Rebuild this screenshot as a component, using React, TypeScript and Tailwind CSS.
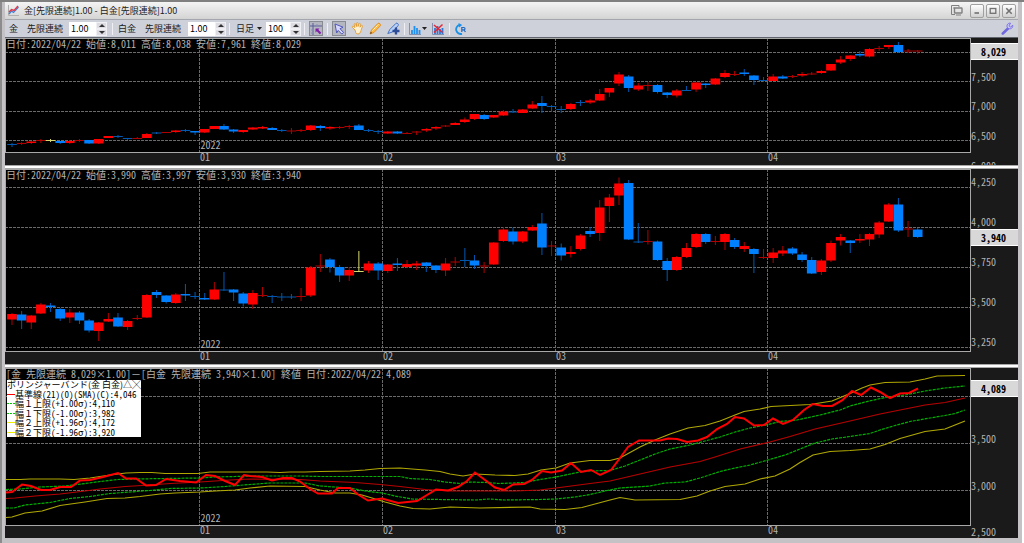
import type { ReactNode } from "react";

// [high, body top, body bottom, low, direction] in plot coordinates
type Candle = [number, number, number, number, "u" | "d" | "y"];
type Label = { text: string; y: number };
type Plot = { top: number; height: number };

const X0 = 5;
const W = 966;
const STEP = 9.635;
const FIRST = 12;

const COLORS = { u: "#ff0000", d: "#0080ff", y: "#f0f080" };
const WICKS = { u: "#b00000", d: "#0058b0", y: "#d8d870" };

const months = [
    { x: 200, label: "01" },
    { x: 383, label: "02" },
    { x: 556, label: "03" },
    { x: 768, label: "04" },
];

const gold: Candle[] = [
    [143, 144, 145, 147, "d"], [142, 143, 144, 145, "u"], [141, 141.5, 143, 144, "u"], [139, 140, 141, 143, "u"], [139, 140, 141, 142, "y"],
    [141, 141, 143, 144, "d"], [140, 141, 143, 144, "u"], [139, 140, 141, 142, "u"], [140, 140, 143.5, 144, "d"], [139, 139, 143.5, 144, "u"],
    [136, 136, 138, 138, "u"], [135, 136, 137, 138, "d"], [138, 138, 139, 140, "d"], [137, 138, 139, 139, "u"], [133, 134, 138, 138, "u"],
    [132, 132.5, 133.5, 134, "d"], [132, 132, 133, 133, "u"], [130, 130.5, 132, 133, "u"], [129, 130, 131, 132, "d"], [131, 131, 132.5, 135, "d"],
    [129, 129, 132.5, 133, "u"], [126, 126, 129, 129, "u"], [124, 126, 129.5, 130, "d"], [129, 129.5, 131.5, 133, "d"], [130, 130, 132, 133, "u"],
    [127, 127.5, 129.5, 130, "u"], [126, 127, 128.5, 129, "u"], [127, 128, 130, 130, "d"], [129, 130, 131, 132, "d"], [128, 130.5, 131.5, 134, "u"],
    [129, 130, 131, 132, "u"], [125, 125.5, 130, 131, "u"], [125, 126, 128, 131, "d"], [126, 127, 128.5, 130, "u"], [126, 127, 128, 129, "u"],
    [125, 126, 127, 129, "u"], [124, 125.5, 130, 130, "d"], [129, 130, 131, 132, "d"], [130, 131, 132, 134, "d"], [131, 131.5, 133.5, 134, "u"],
    [131, 131.5, 133.5, 134, "d"], [132, 133, 134, 134, "u"], [131, 131.5, 132.5, 135, "u"], [128, 129, 130.5, 132, "u"], [126, 127, 128.5, 130, "u"],
    [125, 125.5, 126.5, 127, "u"], [122, 123, 125, 125, "u"], [117.5, 119.5, 122, 123, "u"], [114, 114, 119, 120, "u"], [114, 115, 119, 120, "d"],
    [115, 115, 117.5, 118, "u"], [110, 111.5, 115.5, 116, "u"], [109, 111.5, 112.5, 113, "d"], [109, 109.5, 113, 113, "u"], [101, 104.5, 108.5, 109, "u"],
    [96, 103, 106, 113, "d"], [105, 106, 107, 112, "d"], [106, 109, 110, 113, "d"], [103, 104, 109, 110, "u"], [100, 102, 103, 106, "d"],
    [99, 100.5, 102.5, 104, "u"], [89, 94, 100.5, 101, "u"], [88, 88, 92.5, 97, "u"], [72, 74.5, 83.5, 86, "u"], [75, 76.5, 88, 92, "d"],
    [83, 85.5, 89.5, 91, "u"], [82, 85, 86, 91, "u"], [84, 85, 92, 93.5, "d"], [92, 92.5, 95, 98, "d"], [89, 90.5, 95.5, 97.5, "u"],
    [86, 90, 91, 91, "d"], [82, 82.5, 89.5, 92, "u"], [83, 83.5, 85, 88, "d"], [78, 78.5, 84.5, 85, "u"], [70, 73, 77, 78, "u"],
    [71, 74, 75, 76, "u"], [69, 72.5, 74, 76, "d"], [75, 75.5, 80, 85, "d"], [77, 80, 81, 82, "d"], [74, 76.5, 81, 81, "u"],
    [75, 76.5, 78.5, 79, "d"], [75, 76, 77, 78, "u"], [72, 74, 75.5, 77, "u"], [72, 73.5, 74.5, 75, "u"], [70, 71, 73, 74, "u"],
    [64, 64, 70.5, 71, "u"], [56, 59.5, 62.5, 64, "u"], [55, 55.5, 59, 61, "u"], [51, 54, 55.5, 57, "d"], [48, 49, 56.5, 57.5, "u"],
    [46, 48, 49, 51, "u"], [45, 45, 47, 49, "u"], [42, 45, 52, 53, "d"], [49, 50.5, 51.5, 53, "u"], [50, 50.5, 51.5, 54, "u"],
];

const platinum: Candle[] = [
    [313, 314, 319.5, 325, "u"], [311, 314.5, 320.5, 329, "d"], [315, 315.5, 322.5, 329, "u"], [303, 304.5, 313.5, 314, "u"], [303, 305.5, 307, 312, "d"],
    [308, 309, 318.5, 321, "d"], [309, 312.5, 317.5, 323, "u"], [311, 312.5, 320.5, 324, "d"], [319, 320.5, 330.5, 332.5, "d"], [322, 322.5, 331, 341, "u"],
    [313, 319, 321.5, 322, "u"], [313, 317.5, 326.5, 327, "d"], [320, 321, 327, 330, "u"], [315, 318, 319, 320, "u"], [294, 295, 317.5, 318, "u"],
    [290, 292, 295, 298, "d"], [295, 295.5, 302, 303.5, "d"], [293, 294.5, 303, 304, "u"], [284, 294, 295.5, 301, "d"], [292, 296, 297, 299, "d"],
    [293, 298, 299.5, 300, "d"], [282, 289.5, 299.5, 300, "u"], [272, 289.5, 290.5, 291, "d"], [289, 289.5, 292.5, 301, "d"], [292, 293.5, 303.5, 306.5, "d"],
    [290, 293, 304.5, 309, "u"], [287, 295, 296, 297, "u"], [295, 296, 297, 303, "d"], [293, 296.5, 297.5, 301, "d"], [294, 296.5, 297.5, 299, "d"],
    [288, 296, 297, 301, "u"], [266, 267.5, 295.5, 297, "u"], [254, 265.5, 266.5, 272, "u"], [258, 259.5, 267, 272.5, "d"], [265, 267, 275.5, 282, "d"],
    [267, 270, 275.5, 281, "u"], [251, 271, 272, 272, "y"], [261, 263.5, 270.5, 273, "u"], [262, 263.5, 270.5, 280, "d"], [264, 264.5, 271, 273, "u"],
    [258, 263.5, 265, 271, "d"], [260, 264, 267, 268, "u"], [261, 263.5, 265.5, 270, "u"], [262, 262.5, 266, 272, "d"], [265, 265.5, 270, 273, "d"],
    [258, 263.5, 270.5, 276, "u"], [257, 261.5, 262.5, 266, "u"], [248, 260, 261, 267, "d"], [255, 260.5, 265.5, 269, "d"], [262, 265.5, 266.5, 273, "u"],
    [242, 242.5, 264.5, 265, "u"], [227, 229.5, 241, 242, "u"], [227.5, 231.5, 241.5, 244.5, "d"], [231, 231.5, 241.5, 243, "u"], [225, 227, 230.5, 231, "u"],
    [213, 223.5, 247.5, 255, "d"], [241, 245.5, 246.5, 256, "u"], [243.5, 247.5, 255.5, 260.5, "d"], [246, 252, 254, 257.5, "u"], [234, 235.5, 249, 250.5, "u"],
    [227, 231, 234, 237, "d"], [200, 207.5, 233, 241, "u"], [194, 197.5, 206, 222, "u"], [177.5, 183.5, 195.5, 205, "u"], [180, 183, 239.5, 240, "d"],
    [223, 241.5, 242.5, 243, "d"], [230, 241, 242, 244.5, "u"], [240.5, 241.5, 260, 261, "d"], [258, 261, 270, 281, "d"], [256, 257, 270, 271, "u"],
    [243, 248, 257, 258, "u"], [233, 234, 247, 248, "u"], [233, 234, 242, 244, "d"], [236, 241, 242, 245, "u"], [233, 234, 242, 250, "u"],
    [238, 240, 247, 249, "d"], [242, 246, 249, 252, "u"], [248, 249, 254, 273, "d"], [249, 257, 258, 259, "u"], [248, 252.5, 258, 263, "u"],
    [246, 250.5, 253.5, 256, "u"], [247, 248.5, 253.5, 255, "d"], [252, 254.5, 260, 262, "d"], [257, 260, 273.5, 274, "d"], [259, 260.5, 272, 275, "u"],
    [240.5, 243, 260.5, 262, "u"], [234, 237, 240.5, 245.5, "u"], [240, 240.5, 243, 253, "d"], [234, 239, 240.5, 243, "u"], [233, 234, 239.5, 246, "u"],
    [221, 222.5, 234.5, 238, "u"], [203, 204.5, 221.5, 222, "u"], [198, 204.5, 230.5, 232, "d"], [221, 228.5, 229.5, 237, "u"], [228, 229.5, 237, 238, "d"],
];

const bands = [
    {
        color: "#b0a800",
        points:
            "6,479.5 20,479.5 30,479 60,479 74,479.5 90,478 100,476.5 110,475 118,474 126,473 140,472.5 152,472.5 165,473.5 198,473.5 210,472 267,472 280,472.5 290,472 305,472 320,471.5 350,471 365,470 380,468.5 400,468 412,469 425,470 440,471.5 450,474 463,476 475,474 495,475 515,475.5 528,474 541,470 556,468 570,463 590,460.5 610,460.5 620,458 640,447 655,440 670,434 688,428 705,425.5 720,421 735,415 744,411.5 760,409 771,406.5 810,404.5 832,401 850,393.5 862,388 870,385 885,382.5 910,382 925,379 937,376 965,375.5",
    },
    {
        color: "#b0a800",
        points:
            "6,517.5 12,517 25,513 42,511 60,505.5 85,502 107,498.5 125,498 140,496.5 160,494 175,493 200,492 215,491 235,490 250,488 270,486 305,486.5 320,490 335,493 350,493 362,495 372,498 385,502 400,506 413,508.5 430,509 450,507 480,508 530,507 540,509 565,509.5 582,507.5 595,504 610,500 620,497.5 635,500 680,499.5 697,496 710,491 725,486.5 745,484 760,479 775,476 790,469 800,462.5 813,455 830,451.5 850,450.5 870,449 885,444.5 900,438.5 925,431.5 945,429 955,425 965,421",
    },
    {
        color: "#00b000",
        dash: "3 1",
        points:
            "6,489.5 20,489 40,487 65,486 85,483.5 100,481.5 118,479.5 135,479 165,478.5 200,478 215,477 235,476.5 250,476 300,476 320,476.5 400,476.5 410,478.5 430,479.5 445,482 460,483.5 470,482 485,482.5 500,483.5 525,482.5 540,479.5 556,477 575,473 585,471 610,470.5 625,466 640,460 655,454 670,449 690,445 705,441 720,437 735,432 750,428 768,424.5 780,421.5 797,420 820,415 840,410 850,406 865,402 885,397.5 905,395 925,391 945,388 965,386",
    },
    {
        color: "#00b000",
        dash: "3 1",
        points:
            "6,508 14,508 25,505 50,502.5 70,498.5 90,496.5 110,493.5 130,492 150,490.5 170,488.5 200,488 225,486.5 250,484.5 270,483 305,483 320,486 335,487 350,488 365,491 382,493 395,496 412,499 440,499.5 475,500 490,499 505,500 540,499.5 556,499 575,497 590,494.5 605,491 620,488 650,486 665,483 685,482 700,478 720,471.5 735,468 750,465 768,460 785,455 800,449 815,443 832,439 850,436.5 870,433.5 880,430 895,425.5 910,421.5 930,418 945,415.5 955,413.5 965,410",
    },
    {
        color: "#b80000",
        points:
            "6,498.5 15,498 35,496 60,494 85,491 100,489 125,486.5 150,485 170,483.5 200,482 230,480 250,479 300,479.5 320,481 355,482.5 380,484.5 400,486.5 425,489.5 450,491 515,491 540,490 556,488 590,483.5 610,481 640,474 670,467 700,461.5 715,457 740,449 770,442 790,436.5 815,429 850,421 880,414 910,408 925,405 945,402.5 965,398",
    },
    {
        color: "#ff0000",
        width: 2,
        points:
            "6,492.5 12,492 22,484.5 31,486 41,490 50,490 60,487 71,487 80,480.5 90,480 103,477 118,473 126,478.5 136,478.5 146,485.5 156,485 166,479 180,481 196,482.5 206,475 215,476 225,481 235,485 244,475 250,476 262,477 272,480.5 283,478 292,478 300,481.5 310,489 318,493.5 332,493.5 338,488 350,488 358,494.5 368,500.5 382,498.5 398,503 417,501 427,495 436,489.5 448,490.5 458,487 467,481 475,472.5 485,480 495,487.5 504,490 513,484.5 524,484 532,480 542,471 551,472.5 562,470.5 571,463 581,472 591,470 600,475 611,470 620,458 628,447 639,440.5 660,440.5 668,438.5 677,439 687,442 698,440.5 707,437 717,429 727,424 735,417 744,418.5 754,425.5 764,425 773,418.5 783,424 793,420 804,410 813,404 823,406 832,406 842,400.5 852,391 861,395 871,387.5 880,392 890,398 900,393.5 909,393 918,388.5",
    },
];

const legend = [
    { color: "#ff0000", dash: false, text: "基準線(21)(0)(SMA)(C):4,046" },
    { color: "#00c800", dash: true, text: "幅１上限(+1.00σ):4,110" },
    { color: "#00c800", dash: true, text: "幅１下限(-1.00σ):3,982" },
    { color: "#f0f000", dash: false, text: "幅２上限(+1.96σ):4,172" },
    { color: "#f0f000", dash: false, text: "幅２下限(-1.96σ):3,920" },
];

function Candles({ data }: { data: Candle[] }) {
    return (
        <>
            {data.map(([high, top, bottom, low, dir], i) => {
                const x = FIRST + i * STEP;
                const thin = bottom - top <= 1;
                return (
                    <g key={i}>
                        <rect x={x - 0.5} y={high} width={1} height={low - high} fill={WICKS[dir]} />
                        <rect x={x - STEP / 2} y={top} width={STEP} height={bottom - top} fill={thin ? WICKS[dir] : COLORS[dir]} />
                    </g>
                );
            })}
        </>
    );
}

function Panel({
    plot,
    grid,
    labels,
    price,
    title,
    children,
    overlay,
}: {
    plot: Plot;
    grid: number[];
    labels: Label[];
    price: Label;
    title: string;
    children: ReactNode;
    overlay?: ReactNode;
}) {
    return (
        <section className="flex bg-[#1a1a1a] font-['Noto_Sans_Mono_CJK_JP','Noto_Sans_CJK_JP',monospace] text-[10px] leading-[10px] text-[#b4b4b4]">
            <div className="min-w-0 flex-1">
                <div className="relative border border-[#a8a8a8] bg-black">
                    <svg
                        className="block w-full"
                        height={plot.height - 2}
                        viewBox={`${X0 + 1} ${plot.top + 1} ${W - 2} ${plot.height - 2}`}
                        preserveAspectRatio="none"
                    >
                        <g stroke="#6a6a6a" strokeDasharray="3 1">
                            {grid.map((y) => (
                                <line key={y} x1={X0} x2={X0 + W} y1={y + 0.5} y2={y + 0.5} />
                            ))}
                            {months.map((m) => (
                                <line key={m.label} x1={m.x - 0.5} x2={m.x - 0.5} y1={plot.top} y2={plot.top + plot.height} />
                            ))}
                        </g>
                        {children}
                    </svg>
                    <h2 className="absolute top-0 left-0 whitespace-pre">{title}</h2>
                    <span className="absolute bottom-0.5" style={{ left: `${((200 - X0) / W) * 100}%` }}>
                        2022
                    </span>
                    {overlay}
                </div>
                <div className="relative h-3">
                    {months.map((m) => (
                        <span key={m.label} className="absolute -top-px" style={{ left: `${((m.x - X0) / W) * 100}%` }}>
                            {m.label}
                        </span>
                    ))}
                </div>
            </div>
            <div className="relative w-[47px] shrink-0 overflow-hidden">
                {labels.map((l) => (
                    <span key={l.text} className="absolute left-0" style={{ top: l.y - plot.top - 5 }}>
                        {l.text}
                    </span>
                ))}
                <strong
                    className="absolute inset-x-0 border-y border-white bg-[#d8d8d8] pr-3 text-right leading-[15px] font-bold text-black"
                    style={{ top: price.y - plot.top - 8 }}
                >
                    {price.text}
                </strong>
            </div>
        </section>
    );
}

function Divider() {
    return <div className="h-1 border-y border-[#a8a8a8] bg-white" />;
}

function Separator() {
    return <span className="h-3 w-px bg-[#f0f0f4]" />;
}

function Spinner({ id, value }: { id: string; value: string }) {
    return (
        <span className="flex h-[14px] bg-white">
            <input
                id={id}
                defaultValue={value}
                aria-label={id}
                className={`${value.length > 3 ? "w-[27px]" : "w-[24px]"} bg-white pl-0.5 text-[9px] leading-[14px] text-black outline-none`}
            />
            <span className="flex w-[11px] flex-col bg-[#dcdce2]">
                <button type="button" aria-label="増やす" className="flex h-[7px] items-center justify-center border border-[#f0f0f4]">
                    <svg width="6" height="3" viewBox="0 0 6 3">
                        <path d="M0 3 3 0l3 3z" fill="#333" />
                    </svg>
                </button>
                <button type="button" aria-label="減らす" className="flex h-[7px] items-center justify-center border border-[#f0f0f4]">
                    <svg width="6" height="3" viewBox="0 0 6 3">
                        <path d="M0 0h6L3 3z" fill="#333" />
                    </svg>
                </button>
            </span>
        </span>
    );
}

function Tool({ label, active, children }: { label: string; active?: boolean; children: ReactNode }) {
    return (
        <button
            type="button"
            aria-label={label}
            className={`flex h-[15px] w-[14px] items-center justify-center ${active ? "border border-[#8a8a92] bg-[#b4b6c0]" : ""}`}
        >
            {children}
        </button>
    );
}

function Caret() {
    return (
        <svg width="5" height="3" viewBox="0 0 5 3">
            <path d="M0 0h5L2.5 3z" fill="#222" />
        </svg>
    );
}

function WindowButton({ label, children }: { label: string; children: ReactNode }) {
    return (
        <button
            type="button"
            aria-label={label}
            className="flex h-[14px] w-[14px] items-center justify-center rounded-[2px] border border-[#a0a0a0] bg-linear-to-b from-white to-[#d0d0d0]"
        >
            <svg width="8" height="8" viewBox="0 0 8 8" fill="none" stroke="#707070" strokeWidth="1.6">
                {children}
            </svg>
        </button>
    );
}

function TitleBar() {
    return (
        <header className="flex h-[17px] items-center bg-linear-to-b from-[#f4f4f4] to-[#d4d4d4] pr-0.5 pl-[3px]">
            <svg width="11" height="11" viewBox="0 0 11 11" fill="none">
                <path d="M.5 0v10.5H11" stroke="#b0b0b0" />
                <path d="M1 9 3.5 6l2 1.5L10.5 2" stroke="#4080d8" strokeWidth="1.3" />
                <path d="M1 7 3.5 4.5 6 5.5 10 1" stroke="#e03848" strokeWidth="1.4" />
            </svg>
            <h1 className="ml-[5px] text-[9px] leading-[14px] whitespace-nowrap">金[先限連続]1.00 - 白金[先限連続]1.00</h1>
            <div className="ml-auto flex items-center gap-0.5">
                <button type="button" aria-label="切り離す" className="mr-1 p-px">
                    <svg width="12" height="11" viewBox="0 0 12 11" fill="none" stroke="#808080">
                        <path d="M8 2V.5H.5v9H4M2 3h2" />
                        <rect x="3.5" y="3" width="7.5" height="5" rx=".5" strokeWidth="1.4" />
                        <path d="M5 10h5" />
                    </svg>
                </button>
                <WindowButton label="最小化">
                    <path d="M1.5 6H6" />
                </WindowButton>
                <WindowButton label="最大化">
                    <rect x="1.2" y="1.5" width="5.6" height="4.8" strokeWidth="1.3" />
                </WindowButton>
                <WindowButton label="閉じる">
                    <path d="m1.3 1.3 5.4 5.4m0-5.4L1.3 6.7" />
                </WindowButton>
            </div>
        </header>
    );
}

function Toolbar() {
    return (
        <div className="flex h-[19px] items-center border-t border-b border-t-[#a4a6ae] border-b-[#60646c] bg-[#ced1da] pr-1 pl-1 text-[9px] leading-[14px] whitespace-nowrap">
            <span className="w-[18px]">金</span>
            <label htmlFor="金 倍率" className="w-[42px]">先限連続</label>
            <Spinner id="金 倍率" value="1.00" />
            <span className="w-[5px]" />
            <Separator />
            <span className="ml-[5px] w-[27px]">白金</span>
            <label htmlFor="白金 倍率" className="w-[43px]">先限連続</label>
            <Spinner id="白金 倍率" value="1.00" />
            <span className="w-[3px]" />
            <Separator />
            <button type="button" className="ml-1.5 flex w-[30px] items-center gap-[3px]">
                日足
                <Caret />
            </button>
            <Spinner id="本数" value="100" />
            <div className="ml-[3px] flex items-center gap-1">
                <Separator />
                <Tool label="十字線" active>
                    <svg width="12" height="12" viewBox="0 0 12 12" fill="none" className="shrink-0">
                        <path d="M3 0v12M0 3h12" stroke="#5a5f98" />
                        <path d="M1 7h3M1 10h3M7 1v3" stroke="#8a8fb8" />
                        <path d="M5.5 5.5h4L8.3 6.7l3 3-1.5 1.5-3-3-1.3 1.3z" fill="#8020a8" />
                    </svg>
                </Tool>
                <Separator />
                <Tool label="選択" active>
                    <svg width="12" height="12" viewBox="0 0 12 12" className="shrink-0">
                        <path d="M2 1l8 3.200-3 1.500 3.500 3.700-1.700 1.700-3.600-3.700L3.700 10z" fill="#d8d8ff" stroke="#5058b8" />
                    </svg>
                </Tool>
                <Tool label="移動">
                    <svg width="13" height="13" viewBox="0 0 13 13">
                        <path
                            d="M4 8 1.500 5.500c-.8-1 .2-1.700 1-1.100L4 5.500 3.200 2.500c0-1 1-1.200 1.400-.3L5.500 4.500V1.300c.2-.9 1.300-.9 1.500 0v3.200l1-2.700c.4-.8 1.500-.5 1.400.4L9 5.200l1.300-1.700c.6-.6 1.400 0 1.100.8L10 8.500c-.5 2-1.300 3.500-3 3.500S4.700 11 4.700 10z"
                            fill="#fff0d0"
                            stroke="#e09a30"
                            strokeWidth=".9"
                        />
                    </svg>
                </Tool>
                <Tool label="鉛筆">
                    <svg width="13" height="13" viewBox="0 0 13 13">
                        <path d="M1 12l1.500-4L9 1.300c1-.8 3.300 1.200 2.500 2.300L5 10.500z" fill="#ffb840" stroke="#d88820" strokeWidth=".8" />
                        <path d="M3.500 8.500 9.500 2.500" stroke="#fff0c0" />
                        <path d="M1 12l.8-2.200L3.200 11z" fill="#604020" />
                    </svg>
                </Tool>
                <Tool label="描画追加">
                    <svg width="13" height="13" viewBox="0 0 13 13">
                        <path d="M.8 11.500l2-4L9 1.300c1-.8 3 1 2.200 2.200L5.500 10z" fill="#b8d0f8" stroke="#3868b8" strokeWidth=".9" />
                        <path d="M9 5.500v7M5.500 9h7" stroke="#2c4c98" strokeWidth="2.4" />
                    </svg>
                </Tool>
                <Separator />
                <button type="button" aria-label="指標" className="flex w-[18px] items-center gap-px">
                    <svg width="12" height="12" viewBox="0 0 12 12" fill="none" className="shrink-0">
                        <path d="M.5 0v11.500H12" stroke="#8090b0" />
                        <path d="M3 11V7M5.500 11V3M8 11V5M10.500 11V7" stroke="#2090f0" strokeWidth="1.8" />
                    </svg>
                    <Caret />
                </button>
                <Tool label="指標削除">
                    <svg width="12" height="12" viewBox="0 0 12 12" fill="none">
                        <path d="M.5 0v11.500H12" stroke="#8090b0" />
                        <path d="M3 11V5M5.500 11V3M8 11V6M10.500 11V5" stroke="#3078d8" strokeWidth="1.8" />
                        <path d="m2 2 8.500 7.500M10.500 1.500 2 9.500" stroke="#e02838" strokeWidth="1.5" />
                    </svg>
                </Tool>
                <Separator />
                <Tool label="更新">
                    <svg width="12" height="12" viewBox="0 0 12 12" fill="none">
                        <path d="M7 10.800A4.600 4.600 0 1 1 4.500 1.900" stroke="#1890e8" strokeWidth="1.8" />
                        <path d="M3.500 0 7.200 1.900 4 4.500z" fill="#1890e8" />
                        <path d="M6.800 9V4.500h2c1.600 0 1.600 2.300 0 2.300H7M8.800 6.800 10.500 9" stroke="#2068c0" strokeWidth="1.2" />
                    </svg>
                </Tool>
            </div>
            <button type="button" aria-label="設定" className="ml-auto">
                <svg width="13" height="13" viewBox="0 0 13 13" fill="none">
                    <path d="M1.800 11.500 7 6.500" stroke="#7068e0" strokeWidth="2.6" strokeLinecap="round" />
                    <path d="M9.500 1.200C6 .8 5 4.500 7 6.200c2 1.500 5 .2 4.800-2.900L9.500 5 8 3.800z" fill="#c8c4ff" stroke="#7068e0" strokeWidth=".9" />
                </svg>
            </button>
        </div>
    );
}

function Legend() {
    return (
        <div className="absolute top-[11px] left-px grid h-[57px] w-[134px] grid-rows-6 bg-white text-[9px] leading-[9px] whitespace-nowrap text-black">
            <div className="font-['Noto_Sans_CJK_JP',sans-serif]">ボリンジャーバンド(金 白金)△╳</div>
            {legend.map((l) => (
                <div key={l.text} className="flex items-center">
                    <svg width="8" height="1" viewBox="0 0 8 1" className="shrink-0">
                        <path d="M0 .5h8" stroke={l.color} strokeDasharray={l.dash ? "2 1" : undefined} />
                    </svg>
                    {l.text}
                </div>
            ))}
        </div>
    );
}

export default function App() {
    return (
        <div className="min-h-screen border-t-2 border-t-[#808080] bg-[#c4c2c4] font-['Noto_Sans_CJK_JP',sans-serif] text-[#1c1c1c]">
            <main className="border-r-2 border-l-2 border-r-white border-l-[#8c8c8c] pr-1 pb-[5px] pl-[3px]">
                <TitleBar />
                <Toolbar />
                <Panel
                    plot={{ top: 38, height: 115 }}
                    grid={[52, 81, 111, 140]}
                    title="日付:2022/04/22 始値:8,011 高値:8,038 安値:7,961 終値:8,029"
                    price={{ text: "8,029", y: 51 }}
                    labels={[
                        { text: "7,500", y: 77 },
                        { text: "7,000", y: 106 },
                        { text: "6,500", y: 136 },
                        { text: "6,000", y: 166 },
                    ]}
                >
                    <Candles data={gold} />
                </Panel>
                <Divider />
                <Panel
                    plot={{ top: 169, height: 183 }}
                    grid={[187, 227, 267, 307, 347]}
                    title="日付:2022/04/22 始値:3,990 高値:3,997 安値:3,930 終値:3,940"
                    price={{ text: "3,940", y: 237 }}
                    labels={[
                        { text: "4,250", y: 182 },
                        { text: "4,000", y: 222 },
                        { text: "3,750", y: 262 },
                        { text: "3,500", y: 302 },
                        { text: "3,250", y: 342 },
                    ]}
                >
                    <Candles data={platinum} />
                </Panel>
                <Divider />
                <Panel
                    plot={{ top: 368, height: 158 }}
                    grid={[396, 443, 490]}
                    title="[金 先限連続 8,029×1.00]－[白金 先限連続 3,940×1.00] 終値 日付:2022/04/22 4,089"
                    price={{ text: "4,089", y: 388 }}
                    labels={[
                        { text: "3,500", y: 439 },
                        { text: "3,000", y: 486 },
                        { text: "2,500", y: 532 },
                    ]}
                    overlay={<Legend />}
                >
                    {bands.map((b) => (
                        <polyline key={b.points} points={b.points} fill="none" stroke={b.color} strokeWidth={b.width ?? 1.2} strokeDasharray={b.dash} />
                    ))}
                </Panel>
            </main>
        </div>
    );
}
